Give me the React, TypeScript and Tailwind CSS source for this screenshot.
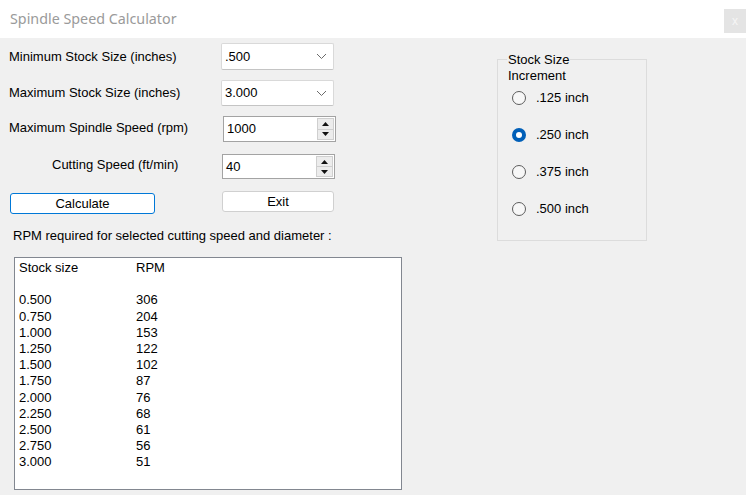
const font = { fontFamily: '"Liberation Sans", Arial, sans-serif' };

function Combo({ value }: { value: string }) {
  return (
    <div className="flex items-center justify-between w-[113px] h-full bg-white border border-[#d9d9d9] border-b-[#c4c4c4] rounded-[2px] pl-[3px] pr-[6px]">
      <span>{value}</span>
      <svg width="11" height="7" viewBox="0 0 11 7">
        <path d="M1 1 L5.5 5.5 L10 1" fill="none" stroke="#6b6b6b" strokeWidth="1" />
      </svg>
    </div>
  );
}

function Spin({ value }: { value: string }) {
  return (
    <div className="flex w-[113px] h-full bg-white border border-[#a3a3a3]">
      <span className="flex-1 pl-[3px] flex items-center">{value}</span>
      <div className="flex flex-col w-[17px] my-[1px] mr-[1px]">
        <div className="flex-1 flex items-center justify-center bg-[#ececec] border border-[#cfcfcf]">
          <svg width="7" height="4" viewBox="0 0 7 4">
            <path d="M0 4 L3.5 0 L7 4 Z" fill="#111" />
          </svg>
        </div>
        <div className="flex-1 flex items-center justify-center bg-[#ececec] border border-t-0 border-[#cfcfcf]">
          <svg width="7" height="4" viewBox="0 0 7 4">
            <path d="M0 0 L3.5 4 L7 0 Z" fill="#111" />
          </svg>
        </div>
      </div>
    </div>
  );
}

function Radio({ label, checked }: { label: string; checked?: boolean }) {
  return (
    <div className="flex items-center h-[37px]">
      {checked ? (
        <div className="w-[14px] h-[14px] rounded-full bg-[#005fb8] flex items-center justify-center">
          <div className="w-[6px] h-[6px] rounded-full bg-white" />
        </div>
      ) : (
        <div className="w-[14px] h-[14px] rounded-full border border-[#5c5c5c] bg-[#f7f7f7]" />
      )}
      <span className="ml-[10px]">{label}</span>
    </div>
  );
}

const rows: [string, string][] = [
  ['0.500', '306'],
  ['0.750', '204'],
  ['1.000', '153'],
  ['1.250', '122'],
  ['1.500', '102'],
  ['1.750', '87'],
  ['2.000', '76'],
  ['2.250', '68'],
  ['2.500', '61'],
  ['2.750', '56'],
  ['3.000', '51'],
];

export default function App() {
  return (
    <div className="w-[746px] h-[495px] bg-[#f0f0f0] flex flex-col overflow-hidden text-[13px] text-black" style={font}>
      <div className="h-[38px] bg-white flex justify-between shrink-0">
        <span
          className="pl-[10px] pt-[8px] text-[14.3px] text-[#9a9a9a]"
          style={{ fontFamily: '"Noto Sans", "Open Sans", sans-serif' }}
        >
          Spindle Speed Calculator
        </span>
        <div className="mt-[9px] w-[22px] h-[24px] bg-[#e4e4e4] flex items-center justify-center text-[#f6f6f6] text-[12px]">
          x
        </div>
      </div>

      <div className="flex">
        <div className="w-[402px] pt-[5px]">
          <div className="flex items-center h-[27px]">
            <span className="w-[221px] pl-[9px]">Minimum Stock Size (inches)</span>
            <Combo value=".500" />
          </div>
          <div className="flex items-center h-[26px] mt-[10px]">
            <span className="w-[221px] pl-[9px]">Maximum Stock Size (inches)</span>
            <Combo value="3.000" />
          </div>
          <div className="flex items-center h-[26px] mt-[10px]">
            <span className="w-[223px] pl-[9px] -mt-[3px]">Maximum Spindle Speed (rpm)</span>
            <Spin value="1000" />
          </div>
          <div className="flex items-center h-[25px] mt-[12px]">
            <span className="w-[222px] pl-[52px] -mt-[3px]">Cutting Speed (ft/min)</span>
            <Spin value="40" />
          </div>
          <div className="flex items-start h-[23px] mt-[12px]">
            <div className="ml-[10px] mt-[2px] w-[145px] h-[21px] bg-white border border-[#0078d7] rounded-[3px] flex items-center justify-center">
              Calculate
            </div>
            <div className="ml-[67px] w-[112px] h-[21px] bg-white border border-[#d0d0d0] rounded-[3px] flex items-center justify-center">
              Exit
            </div>
          </div>
          <div className="pl-[13px] mt-[14px] leading-[16px]">
            RPM required for selected cutting speed and diameter :
          </div>
          <div className="ml-[14px] mt-[13px] w-[388px] h-[233px] bg-white border border-[#828790] pl-[4px] pt-[2px] leading-[16.2px]">
            <div className="flex">
              <span className="w-[117px]">Stock size</span>
              <span>RPM</span>
            </div>
            <div className="h-[16.2px]" />
            {rows.map(([s, r]) => (
              <div key={s} className="flex">
                <span className="w-[117px]">{s}</span>
                <span>{r}</span>
              </div>
            ))}
          </div>
        </div>

        <div className="relative ml-[95px] mt-[21px] w-[150px] h-[182px] border border-[#dcdcdc] pl-[14px] pt-[19px]">
          <div className="absolute left-[9px] -top-[8px] px-[1px] bg-[#f0f0f0] leading-[16px]">
            Stock Size
            <br />
            Increment
          </div>
          <Radio label=".125 inch" />
          <Radio label=".250 inch" checked />
          <Radio label=".375 inch" />
          <Radio label=".500 inch" />
        </div>
      </div>
    </div>
  );
}
